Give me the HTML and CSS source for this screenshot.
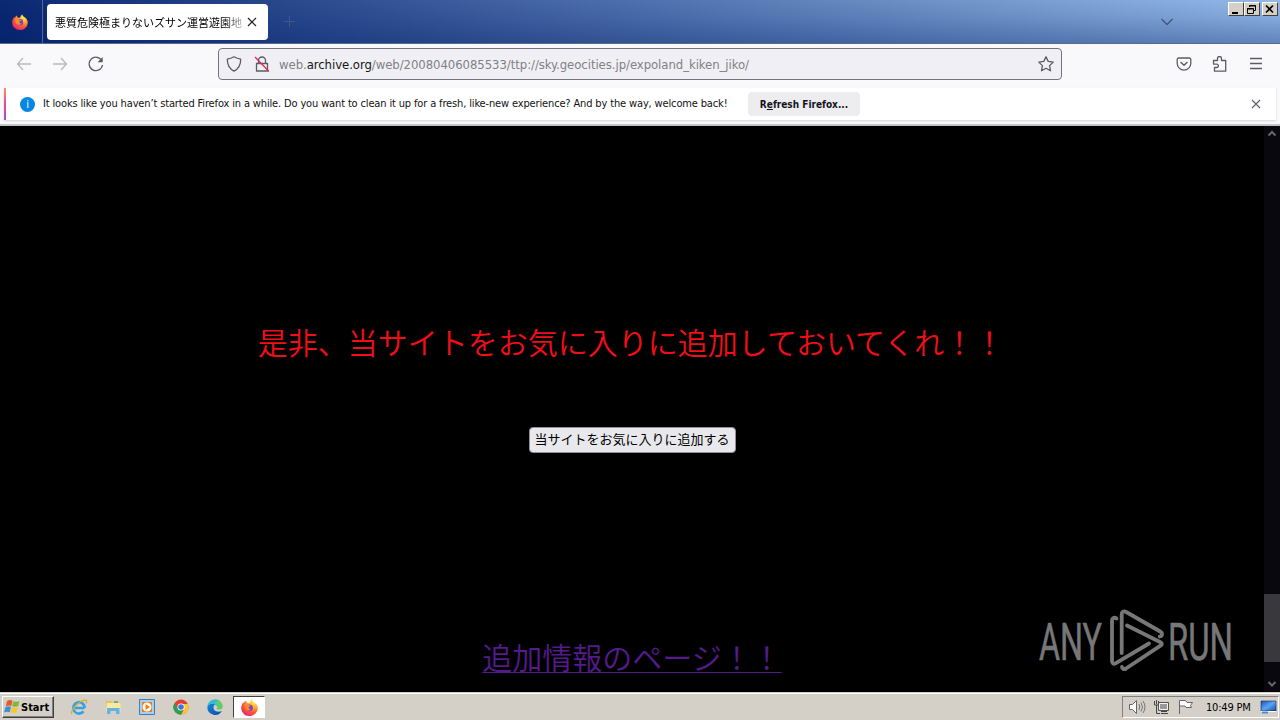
FILE: index.html
```html
<!DOCTYPE html>
<html lang="ja">
<head>
  <meta charset="UTF-8" />
  <meta name="viewport" content="width=device-width, initial-scale=1.0" />
  <title>Firefox</title>
  <link rel="stylesheet" href="styles.css">
</head>
<body>

  <!-- shared logo shapes -->
  <svg class="defs" width="0" height="0">
    <defs>
      <radialGradient id="flame" cx="75%" cy="15%" r="95%">
        <stop offset="0" stop-color="#fff04e" />
        <stop offset=".35" stop-color="#ffb02a" />
        <stop offset=".65" stop-color="#ff5a36" />
        <stop offset="1" stop-color="#e8206c" />
      </radialGradient>
      <linearGradient id="edge" x1="0" y1="0" x2="1" y2="1">
        <stop offset="0" stop-color="#1784d9" />
        <stop offset="1" stop-color="#0b4fa8" />
      </linearGradient>
      <linearGradient id="screen" x1="0" y1="0" x2="1" y2="1">
        <stop offset="0" stop-color="#1554b4" />
        <stop offset=".5" stop-color="#5ba4f0" />
        <stop offset="1" stop-color="#124aa8" />
      </linearGradient>
      <symbol id="firefox" viewBox="0 0 16 16">
        <path fill="url(#flame)" d="M10.2.2c.2 1.2.9 2 2 2.900 1.400.9 3.600 2.800 3.600 5.700A7.800 7.400 0 0 1 .2 8.500C.2 6.300 1 4.500 2.300 3l.3 1.100C3.200 2.800 4 2 4.900 1.500c0 1 .4 1.700 1.100 2.300h2C8.600 2.500 9.200 1 10.200.2z" />
        <circle cx="8" cy="8.300" r="3.200" fill="#7a3fd6" />
        <path fill="#ff8a24" d="M2.700 5.200c1.800-.8 3.600-.3 4.800.7l1.800.2c-.2 1-1.300 1.300-2 1.400-.3 1.400.9 2.300 2.300 2-1.200 1.900-4.700 1.800-5.500-.6z" />
      </symbol>
    </defs>
  </svg>

  <div class="desktop">
    <header class="titlebar">
      <div class="view-tab"><svg width="16" height="16"><use href="#firefox" /></svg></div>
      <div class="tab">
        <span class="tab-title">悪質危険極まりないズサン運営遊園地</span>
        <svg class="tab-close" width="10" height="10" viewBox="0 0 10 10"><path d="M1 1l8 8M9 1L1 9" /></svg>
      </div>
      <svg class="new-tab" width="13" height="13" viewBox="0 0 13 13"><path d="M6.500 1v11M1 6.500h11" /></svg>
      <svg class="all-tabs" width="14" height="8" viewBox="0 0 14 8"><path d="M1.500 1L7 6.500 12.500 1" /></svg>
      <div class="win-buttons">
        <span class="win-btn"><svg width="12" height="11" viewBox="0 0 12 11"><path d="M2 9h6" stroke-width="2" /></svg></span>
        <span class="win-btn"><svg width="12" height="11" viewBox="0 0 12 11"><path d="M3.500 3V1.500h6v5H8M3 2h7M1.500 4.500h6v5h-6zM1 5h7" /></svg></span>
        <span class="win-btn close"><svg width="12" height="11" viewBox="0 0 12 11"><path d="M2 1.500l7 7M9 1.500l-7 7" stroke-width="1.700" /></svg></span>
      </div>
    </header>

    <nav class="toolbar">
      <svg class="icon faded" width="16" height="16" viewBox="0 0 16 16"><path d="M15 8H1.500M7 2L1.500 8 7 14" /></svg>
      <svg class="icon faded" width="16" height="16" viewBox="0 0 16 16"><path d="M1 8h13.500M9 2l5.500 6L9 14" /></svg>
      <svg class="icon" width="16" height="16" viewBox="0 0 16 16"><path d="M14 5.200A6.700 6.700 0 1 0 14.500 9" /><path d="M14.700 1v5.200H9.500z" fill="#5b5b66" stroke="none" /></svg>
      <div class="urlbar">
        <svg class="icon" width="16" height="16" viewBox="0 0 16 16"><path d="M8 .8c2 1.200 4 2 6.700 2.300C14.800 8.500 13 12.700 8 15.200 3 12.700 1.200 8.500 1.300 3.100 4 2.800 6 2 8 .8z" /></svg>
        <svg class="icon lock" width="16" height="16" viewBox="0 0 16 16"><path d="M4.500 7V4.500a3.500 3.500 0 0 1 7 0V7M2.500 7.500h11v7.500h-11z" /><path d="M1 1l14 14.500" stroke="#e22850" /></svg>
        <span class="url">web.<b>archive.org</b>/web/20080406085533/ttp://sky.geocities.jp/expoland_kiken_jiko/</span>
        <svg class="icon star" width="16" height="16" viewBox="0 0 16 16"><path d="M8 .8l2.200 4.600 5 .7-3.600 3.500.9 5.200L8 12.300l-4.500 2.500.9-5.200L.8 6.100l5-.7z" /></svg>
      </div>
      <div class="tools">
        <svg class="icon" width="16" height="16" viewBox="0 0 16 16"><path d="M2.500 2h11a1.300 1.300 0 0 1 1.300 1.300v4a6.800 6.800 0 0 1-13.600 0v-4A1.300 1.300 0 0 1 2.500 2zM4.500 6L8 9.300 11.500 6" /></svg>
        <svg class="icon" width="16" height="16" viewBox="0 0 16 16"><path d="M5.500 4.500V2.500a2 2 0 0 1 4 0v2h4.200v10.700H2.500v-3.700h2.200a1.700 1.700 0 0 0 0-3.400H1.500V4.500z" /></svg>
        <svg class="icon" width="16" height="16" viewBox="0 0 16 16"><path d="M2 2.500h12M2 7.500h12M2 12.500h12" /></svg>
      </div>
    </nav>

    <div class="notice-area">
      <div class="notice">
        <span class="info">i</span>
        <span class="notice-text">It looks like you haven’t started Firefox in a while. Do you want to clean it up for a fresh, like-new experience? And by the way, welcome back!</span>
        <button class="refresh"><span>R<u>e</u>fresh Firefox...</span></button>
        <svg class="icon notice-close" width="10" height="10" viewBox="0 0 10 10"><path d="M1 1l8 8M9 1L1 9" /></svg>
      </div>
    </div>

    <main class="viewport">
      <div class="page">
        <p class="headline">是非、当サイトをお気に入りに追加しておいてくれ！！</p>
        <button class="favorite">当サイトをお気に入りに追加する</button>
        <a class="more" href="#">追加情報のページ！！</a>
        <svg class="watermark" width="210" height="70" viewBox="0 0 210 70">
          <g fill="#777" stroke="#777" stroke-width=".6" font-family="Roboto, sans-serif" font-size="52">
            <text x="5" y="53.500" textLength="63" lengthAdjust="spacingAndGlyphs">ANY</text>
            <text x="134" y="53.500" textLength="65" lengthAdjust="spacingAndGlyphs">RUN</text>
          </g>
          <g fill="none" stroke="#777" stroke-width="3.800" stroke-linecap="round" stroke-linejoin="round">
            <path d="M82.500 12.500c-2-1.500-4.500-.5-4.500 2V55c0 2.500 1.500 3.500 3.500 2.300L115 37.500" />
            <path d="M87.700 47V8.500c0-3 2-4 4.500-2.500l34 19.500c2.500 1.500 2.500 4.500-.5 5" />
            <path d="M93 19.500l33.500 16.700c1.800 1 1.800 2.500 0 3.500L92 62.500c-2 1.200-4 .5-4-1.500" />
          </g>
        </svg>
      </div>
      <div class="scrollbar">
        <svg width="16" height="16" viewBox="0 0 16 16"><path d="M4.500 9.500L8 6l3.500 3.500" /></svg>
        <div class="track"><div class="thumb"></div></div>
        <svg width="16" height="16" viewBox="0 0 16 16"><path d="M4.500 6L8 9.500 11.500 6" /></svg>
      </div>
    </main>

    <footer class="taskbar">
      <div class="start">
        <svg width="17" height="16" viewBox="0 0 17 16">
          <path fill="#e8592b" d="M3 2C5 .7 7 1 8.500 1.800L7.300 7C5.500 6.200 3.800 6.200 1.800 7.200z" />
          <path fill="#7db83a" d="M9.300 2.200c2 .9 4.200.8 6.200-.3L14.200 7c-2 1-4 1-6.100.3z" />
          <path fill="#3d8fdc" d="M1.500 8.100c2-1 3.800-1 5.500-.2l-1.300 5.400c-1.800-.8-3.700-.8-5.600.2z" />
          <path fill="#fbc42d" d="M7.900 8.200c2 .8 4.100.7 6.100-.3l-1.400 5.400c-2 1-4 1-6.100.3z" />
        </svg>
        <span>Start</span>
      </div>
      <div class="launchers">
        <svg width="18" height="18" viewBox="0 0 18 18">
          <path d="M14.500 10H5M14.700 10a5.700 5.700 0 1 0-1.200 3.400" fill="none" stroke="#35a3e3" stroke-width="2.600" />
          <path d="M2 16C-.5 13 10 2 15.500 2.200c1.500.2 1.300 2 .5 3.300" fill="none" stroke="#dfaa2e" stroke-width="1.300" />
        </svg>
        <svg width="18" height="18" viewBox="0 0 18 18">
          <path fill="#e6c35c" d="M2 3h5l1 1.500h7V13H2z" />
          <path fill="#fae9a3" d="M3 5h12l1.500 1v7H2z" />
          <path fill="#63b3e4" d="M3 10h12.500v6H12v-3H6.500v3H3z" />
          <path stroke="#5da94b" stroke-width="1.500" d="M10 4h4" />
        </svg>
        <svg width="18" height="18" viewBox="0 0 18 18">
          <path fill="#a9cff0" stroke="#397fba" d="M1.500 1.500h15v15h-15z" />
          <path fill="#f27b13" d="M4 4h10v10H4z" />
          <circle cx="9" cy="9" r="4.500" fill="#fff" />
          <path fill="#f27b13" d="M7.500 6L12 9l-4.500 3z" />
        </svg>
        <svg width="18" height="18" viewBox="0 0 18 18">
          <circle cx="9" cy="9" r="7.500" fill="#e33e31" />
          <path fill="#2d9f4d" d="M2.500 5.200L9 16.500A7.500 7.500 0 0 1 2.500 5.200z" />
          <path fill="#fac632" d="M9 6h6.900A7.500 7.500 0 0 1 9 16.500l3.200-5.500z" />
          <path fill="#2d9f4d" d="M2.500 5.200L6 11l5 2-2 3.500A7.500 7.500 0 0 1 2.500 5.200z" />
          <circle cx="9" cy="9" r="3.600" fill="#fff" />
          <circle cx="9" cy="9" r="2.800" fill="#3977df" />
        </svg>
        <svg width="18" height="18" viewBox="0 0 18 18">
          <path fill="url(#edge)" d="M1.300 9c1-3 5-4.500 8-2.500-3 1.500-2.300 6.300 1.700 7 2 .4 3.700 0 5-.8A7.800 7.800 0 0 1 1.300 9z" />
          <path fill="#2fbbdc" d="M1.300 8.500a7.800 7.800 0 0 1 14-4L10 8C9 5 3.500 5 1.300 8.500z" />
          <path fill="#61cb68" d="M12 2.200c4 1.500 6 6 4 8.200-1.500 1.600-5 1.200-5.500.3C12 9 11 6 8.500 5.200z" />
        </svg>
      </div>
      <div class="running"><svg width="17" height="17"><use href="#firefox" /></svg></div>
      <div class="tray">
        <svg width="18" height="16" viewBox="0 0 18 16"><path fill="#fff" stroke="#666" d="M1.500 5.500h3l4-4v13l-4-4h-3z" /><path fill="none" stroke="#777" d="M11 5q1.500 3 0 6M13 3.500q3 4.500 0 9M15 2q4 6 0 12" /></svg>
        <svg width="17" height="16" viewBox="0 0 17 16"><path fill="#999" stroke="#555" d="M5.500 3.500h10v8h-10z" /><path stroke="#f4f4f4" fill="none" d="M6.500 4.500h8v6h-8z" /><path d="M8 12.500h6M8 14.500h7M1.500 2v4h4V2M3.500 1v4M3.500 6v8.500H7" fill="none" stroke="#444" /></svg>
        <svg width="17" height="16" viewBox="0 0 17 16"><path fill="#fff" stroke="#666" d="M2.500 15V1.500h6l1.500 2h5.500l-2 3 1 2H9l-1-1.500H2.500" /></svg>
        <span class="clock">10:49 PM</span>
        <svg class="show-desktop" width="17" height="14" viewBox="0 0 17 14"><path fill="url(#screen)" stroke="#225" stroke-width=".6" d="M1 1h15v10H1z" /><path stroke="#fff" d="M1 11.500h15" /><path stroke="#5588c8" stroke-width="2" d="M2 12.500h6" /></svg>
      </div>
    </footer>
  </div>

</body>
</html>
```
FILE: styles.css
```css
* {
  box-sizing: border-box;
}
body {
  margin: 0;
  font-family: "DejaVu Sans Condensed", "DejaVu Sans", "Noto Sans CJK JP", sans-serif;
  font-size: 11px;
  color: #111;
}
svg {
  display: block;
  flex: none;
}
button {
  font-family: inherit;
  border: none;
  padding: 0;
}
.defs {
  position: absolute;
}
.desktop {
  display: flex;
  flex-direction: column;
  width: 1280px;
  height: 720px;
  overflow: hidden;
}

/* title bar */
.titlebar {
  display: flex;
  align-items: center;
  height: 44px;
  background: linear-gradient(to bottom, rgba(20,70,170,0.12), rgba(0,40,140,0.2) 40%, rgba(0,35,115,0.42)), linear-gradient(to right, #0a246a, #a6caf0);
  border-bottom: 1px solid #5c6a8a;
}
.view-tab {
  display: flex;
  align-items: center;
  justify-content: center;
  width: 43px;
  height: 43px;
  padding-right: 3px;
  border-right: 1px solid #52669a;
}
.tab {
  display: flex;
  align-items: center;
  width: 221px;
  height: 36px;
  margin-left: 4px;
  padding-left: 8px;
  border-radius: 4px;
  background: #fff;
}
.tab-title {
  width: 187px;
  overflow: hidden;
  white-space: nowrap;
  font-family: "Noto Sans CJK JP", sans-serif;
  font-size: 11px;
  color: #000;
  -webkit-mask-image: linear-gradient(to right, #000 168px, rgba(0,0,0,0.3));
  mask-image: linear-gradient(to right, #000 168px, rgba(0,0,0,0.3));
}
.tab-close {
  margin-left: 5px;
  fill: none;
  stroke: #222;
  stroke-width: 1.2;
}
.new-tab {
  margin-left: 15px;
  stroke: #45577c;
}
.all-tabs {
  margin-left: auto;
  fill: none;
  stroke: #405778;
  stroke-width: 1.3;
}
.win-buttons {
  display: flex;
  align-self: flex-start;
  margin: 2px 2px 0 54px;
}
.win-btn {
  width: 16px;
  height: 14px;
  padding: 1px;
  background: #d4d0c8;
  border: 1px solid;
  border-color: #fff #404040 #404040 #fff;
}
.win-btn.close {
  margin-left: 2px;
}
.win-btn svg {
  fill: none;
  stroke: #000;
}

/* navigation */
.toolbar {
  display: flex;
  align-items: center;
  height: 44px;
  padding: 0 16px 4px;
  background: #f9f9fb;
}
.icon {
  fill: none;
  stroke: #5b5b66;
  stroke-width: 1.3;
  stroke-linejoin: round;
}
.toolbar > .icon {
  margin-right: 20px;
}
.faded {
  stroke: #b9b9bf;
}
.urlbar {
  display: flex;
  align-items: center;
  width: 844px;
  height: 32px;
  margin-left: 94px;
  padding: 0 7px;
  background: #f0f0f4;
  border: 1px solid #73737b;
  border-radius: 4px;
}
.lock {
  margin-left: 12px;
}
.url {
  margin-left: 9px;
  font-size: 13px;
  letter-spacing: -0.06px;
  white-space: nowrap;
  color: #808087;
}
.url b {
  font-weight: normal;
  color: #15141a;
}
.star {
  margin-left: auto;
}
.tools {
  display: flex;
  gap: 20px;
  margin-left: auto;
}

/* refresh notification */
.notice-area {
  height: 38px;
  padding-right: 4px;
  background: #f9f9fb;
  border-bottom: 2px solid #c4c4c8;
}
.notice {
  display: flex;
  align-items: center;
  height: 32px;
  margin-left: 4px;
  padding: 0 15px 0 14px;
  background: #fff;
  border-left: 2px solid;
  border-image: linear-gradient(#f69868, #e94898, #9554c8) 1;
  box-shadow: 0 1px 2px rgba(0,0,0,0.15);
}
.info {
  width: 15px;
  height: 15px;
  border-radius: 50%;
  background: #0787e2;
  color: #fff;
  text-align: center;
  line-height: 15px;
}
.notice-text {
  width: 685px;
  margin-left: 8px;
  padding-bottom: 2px;
  white-space: nowrap;
  letter-spacing: -0.145px;
}
.refresh {
  width: 112px;
  height: 24px;
  margin-left: 20px;
  border-radius: 4px;
  background: #ededf0;
  font-size: 10px;
  font-weight: bold;
  color: #15141a;
}
.notice-close {
  margin-left: auto;
  stroke-width: 1.1;
}

/* web page */
.viewport {
  display: flex;
  height: 566px;
  background: #000;
}
.page {
  position: relative;
  display: flex;
  flex-direction: column;
  align-items: center;
  width: 1264px;
  font-family: "Noto Sans CJK JP", sans-serif;
}
.headline {
  margin: 193px 0 0;
  padding-right: 2px;
  font-size: 30px;
  font-weight: 350;
  line-height: 44px;
  color: #f00f18;
}
.favorite {
  width: 207px;
  height: 26px;
  margin-top: 64px;
  padding-bottom: 2px;
  background: #e9e9ed;
  border: 1px solid #8f8f9d;
  border-radius: 4px;
  font-size: 13px;
  line-height: 22px;
  color: #000;
}
.more {
  margin-top: 181px;
  font-size: 30px;
  font-weight: 350;
  line-height: 44px;
  color: #551a8b;
  text-decoration-thickness: 1px;
  text-underline-offset: 3px;
}
.watermark {
  position: absolute;
  right: 20px;
  bottom: 16px;
}
.scrollbar {
  display: flex;
  flex-direction: column;
  width: 16px;
  background: #08080e;
}
.scrollbar svg {
  fill: none;
  stroke: #65656c;
  stroke-width: 2;
}
.track {
  flex: 1;
  padding-top: 452px;
}
.thumb {
  height: 68px;
  background: #38383d;
}

/* taskbar */
.taskbar {
  display: flex;
  align-items: center;
  height: 28px;
  padding: 2px 0 0 2px;
  background: #d4d0c8;
  box-shadow: inset 0 1px #d4d0c8, inset 0 2px #fff;
}
.start {
  display: flex;
  align-items: center;
  width: 52px;
  height: 22px;
  padding-left: 1px;
  border: 1px solid;
  border-color: #fff #404040 #404040 #fff;
  box-shadow: inset -1px -1px #808080;
  font-weight: bold;
  font-size: 11px;
  color: #000;
}
.launchers {
  display: flex;
  gap: 16px;
  margin-left: 16px;
}
.running {
  display: flex;
  align-items: center;
  justify-content: center;
  width: 32px;
  height: 22px;
  margin-left: 9px;
  background: #fff;
  border: 1px solid;
  border-color: #404040 #fff #fff #404040;
}
.tray {
  display: flex;
  align-items: center;
  gap: 7px;
  width: 157px;
  height: 22px;
  margin: 0 1px 0 auto;
  padding-left: 5px;
  border: 1px solid;
  border-color: #808080 #fff #fff #808080;
}
.clock {
  width: 46px;
  margin-left: 5px;
  white-space: nowrap;
  letter-spacing: -0.2px;
  color: #000;
}
.show-desktop {
  margin-left: 1px;
}
```
